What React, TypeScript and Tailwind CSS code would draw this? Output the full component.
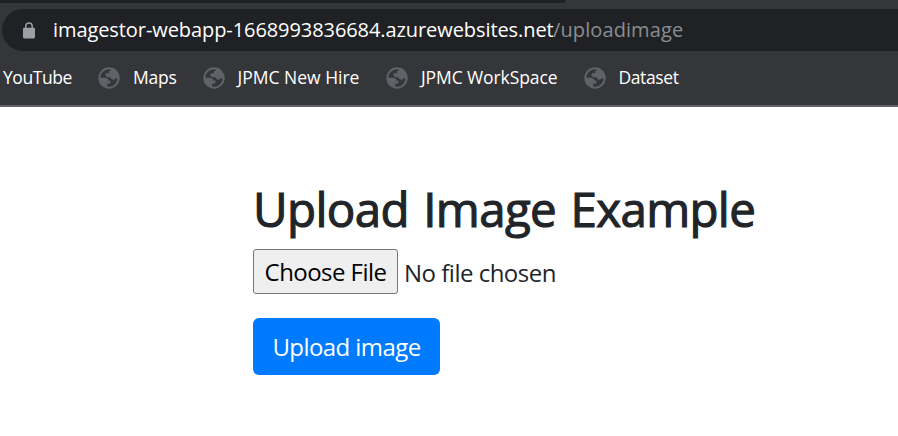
function Globe() {
  return (
    <svg className="h-[22px] w-[22px] shrink-0" viewBox="0 0 22 22" fill="none">
      <circle cx="11" cy="11" r="9.7" stroke="#5f6368" strokeWidth="2" />
      <path
        d="M1.6 10.8H6.5C8.8 10.8 10.2 11.8 10.3 13.5H12.4V16.5H9.2V20.5C4.5 19.8 1.5 16 1.6 10.8ZM11 1.5C14.5 1.5 17 3 18.6 5.3C20.2 7.4 20.5 9.3 20.4 11.6H17.3C16.6 13 14.2 12.9 13.2 11.7L12.6 10.3H9.5C7.3 9.9 7 7.4 8.2 6.3H11V4.1H12.6V1.8Z"
        fill="#5f6368"
      />
    </svg>
  );
}

function Lock() {
  return (
    <svg className="h-[17px] w-[12px] shrink-0" viewBox="0 0 12 17" fill="none">
      <path d="M2.8 7V4.2C2.8 2.2 4.1 1 6 1S9.2 2.2 9.2 4.2V7" stroke="#9aa0a6" strokeWidth="1.5" />
      <rect y="5.8" width="12" height="10.6" rx="1.3" fill="#9aa0a6" />
    </svg>
  );
}

const bookmarks = [
  { label: "Maps", width: "w-[44px]", tracking: "tracking-[-0.2px]" },
  { label: "JPMC New Hire", width: "w-[123px]", tracking: "tracking-[0px]" },
  { label: "JPMC WorkSpace", width: "w-[137px]", tracking: "tracking-[-0.1px]" },
  { label: "Dataset", width: "w-[62px]", tracking: "tracking-[-0.4px]" },
];

export default function App() {
  return (
    <div className="h-[436px] w-[898px] overflow-hidden bg-white font-['Open_Sans',sans-serif] whitespace-nowrap">
      <header className="flex h-[107px] flex-col border-b-2 border-[#5f6368] bg-[#35363a]">
        <div className="h-[3px] w-[566px] rounded-br-[3px] bg-[#202124]" />
        <div className="mt-[6px] ml-[2px] flex h-[42px] items-center rounded-l-full bg-[#202124] pl-[21px]">
          <Lock />
          <div className="ml-[18px] flex text-[20px] leading-[42px] text-white">
            <span className="w-[500px] tracking-[-0.08px]">
              imagestor-webapp-1668993836684.azurewebsites.net
            </span>
            <span className="tracking-[0.1px] text-[#8a8d91]">/uploadimage</span>
          </div>
        </div>
        <nav className="flex h-[54px] items-center pl-[3px] text-[17.5px] text-white">
          <span className="w-[69px] pb-[2px] tracking-[-0.45px]">YouTube</span>
          {bookmarks.map((b) => (
            <div key={b.label} className="ml-[26px] flex items-center">
              <Globe />
              <span className={`ml-[13px] mr-[-0.5px] pb-[2px] ${b.width} ${b.tracking}`}>{b.label}</span>
            </div>
          ))}
        </nav>
      </header>
      <main className="flex flex-col items-start pt-[73px] pl-[253px] text-[#212529]">
        <h1 className="h-[69px] text-[47.5px] leading-[58px] font-normal tracking-[-0.65px] [word-spacing:2.7px] [-webkit-text-stroke:1.1px_#212529]">
          Upload Image Example
        </h1>
        <div className="flex h-[45px] items-center text-[24px]">
          <button className="h-[45px] w-[145px] rounded-[3px] border border-[#767676] bg-[#efefef] tracking-[-0.55px] text-black">
            Choose File
          </button>
          <span className="ml-[6px] pt-[2px] tracking-[-0.5px]">No file chosen</span>
        </div>
        <button className="mt-[24px] h-[57px] w-[187px] rounded-[6px] bg-[#007bff] text-[24px] tracking-[-0.57px] text-white">
          Upload image
        </button>
      </main>
    </div>
  );
}
